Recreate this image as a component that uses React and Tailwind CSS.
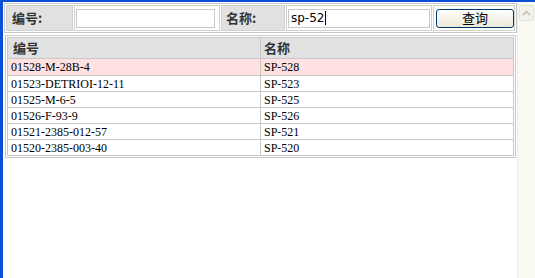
import React from 'react'

const rows = [
    ['01528-M-28B-4', 'SP-528', true],
    ['01523-DETRIOI-12-11', 'SP-523'],
    ['01525-M-6-5', 'SP-525'],
    ['01526-F-93-9', 'SP-526'],
    ['01521-2385-012-57', 'SP-521'],
    ['01520-2385-003-40', 'SP-520'],
]

const cjk = "font-['SimSun','Noto_Sans_CJK_SC',sans-serif]"

const App = () => {
    return (
        <div className="flex h-[278px] w-[535px] overflow-hidden bg-[#0b4fd6] pl-[3px] pt-[2px]">
            <div className="flex flex-1 bg-white">
                {/* page */}
                <div className="flex w-[514px] flex-col pl-[1px] pt-[1px]">
                    {/* search bar */}
                    <div className="flex h-[30px] w-[513px] gap-[1px] border border-[#c8c8c8] bg-white p-[1px]">
                        <div className={`flex w-[67px] items-center border border-[#d0d0d0] bg-[#e1e1e1] pl-[5px] text-[13px] font-bold text-[#333] ${cjk}`}>
                            编号:
                        </div>
                        <div className="flex w-[146px] items-center border border-[#d0d0d0] pl-[1px]">
                            <div className="h-[19px] w-[139px] border border-[#c8c8c8] bg-white" />
                        </div>
                        <div className={`flex w-[64px] items-center border border-[#d0d0d0] bg-[#e1e1e1] pl-[4px] text-[13px] font-bold text-[#333] ${cjk}`}>
                            名称:
                        </div>
                        <div className="flex w-[146px] items-center border border-[#d0d0d0] pl-[1px]">
                            <div className="flex h-[19px] w-[142px] items-center border border-[#c8c8c8] bg-white pl-[2px] font-['Verdana','DejaVu_Sans',sans-serif] text-[12px] text-black">
                                sp-52<span className="ml-[1px] inline-block h-[14px] w-[1px] bg-black" />
                            </div>
                        </div>
                        <div className="flex flex-1 items-center border border-[#d0d0d0] pl-[2px]">
                            <button className={`flex h-[19px] w-[78px] items-center justify-center rounded-[3px] border border-[#003c74] bg-gradient-to-b from-white to-[#ece9d8] text-[13px] text-black ${cjk}`}>
                                查询
                            </button>
                        </div>
                    </div>

                    {/* result table */}
                    <div className="ml-[1px] mt-[2px] w-[511px] border border-[#c8c8c8] p-[1px]">
                        <div className="border border-[#c8c8c8]">
                            <div className={`flex h-[21px] border-b border-[#c8c8c8] bg-[#e1e1e1] text-[13px] font-bold text-[#333] ${cjk}`}>
                                <div className="flex w-[253px] items-center border-r border-[#c8c8c8] pl-[5px]">编号</div>
                                <div className="flex flex-1 items-center pl-[3px]">名称</div>
                            </div>
                            {rows.map(([code, name, hot], i) => (
                                <div
                                    key={code}
                                    className={`flex h-[16px] font-['Times_New_Roman','Liberation_Serif',serif] text-[12px] leading-[16px] text-black ${i > 0 ? 'border-t border-[#c8c8c8]' : ''} ${hot ? 'bg-[#ffe1e1]' : 'bg-white'}`}
                                >
                                    <div className="w-[253px] border-r border-[#c8c8c8] pl-[3px]">{code}</div>
                                    <div className="flex-1 pl-[3px]">{name}</div>
                                </div>
                            ))}
                        </div>
                    </div>
                </div>

                {/* scrollbar */}
                <div className="ml-auto flex w-[18px] flex-col items-center border-l border-[#eeede5] bg-[#fafaf3] pt-[3px]">
                    <div className="flex h-[16px] w-[15px] items-center justify-center rounded-[2px] border border-[#e3e2da] bg-[#f4f3ec]">
                        <svg width="9" height="6" viewBox="0 0 9 6">
                            <path d="M1 5 L4.5 1.5 L8 5" fill="none" stroke="#c9c8c0" strokeWidth="2" />
                        </svg>
                    </div>
                </div>
            </div>
        </div>
    )
}

export default App
